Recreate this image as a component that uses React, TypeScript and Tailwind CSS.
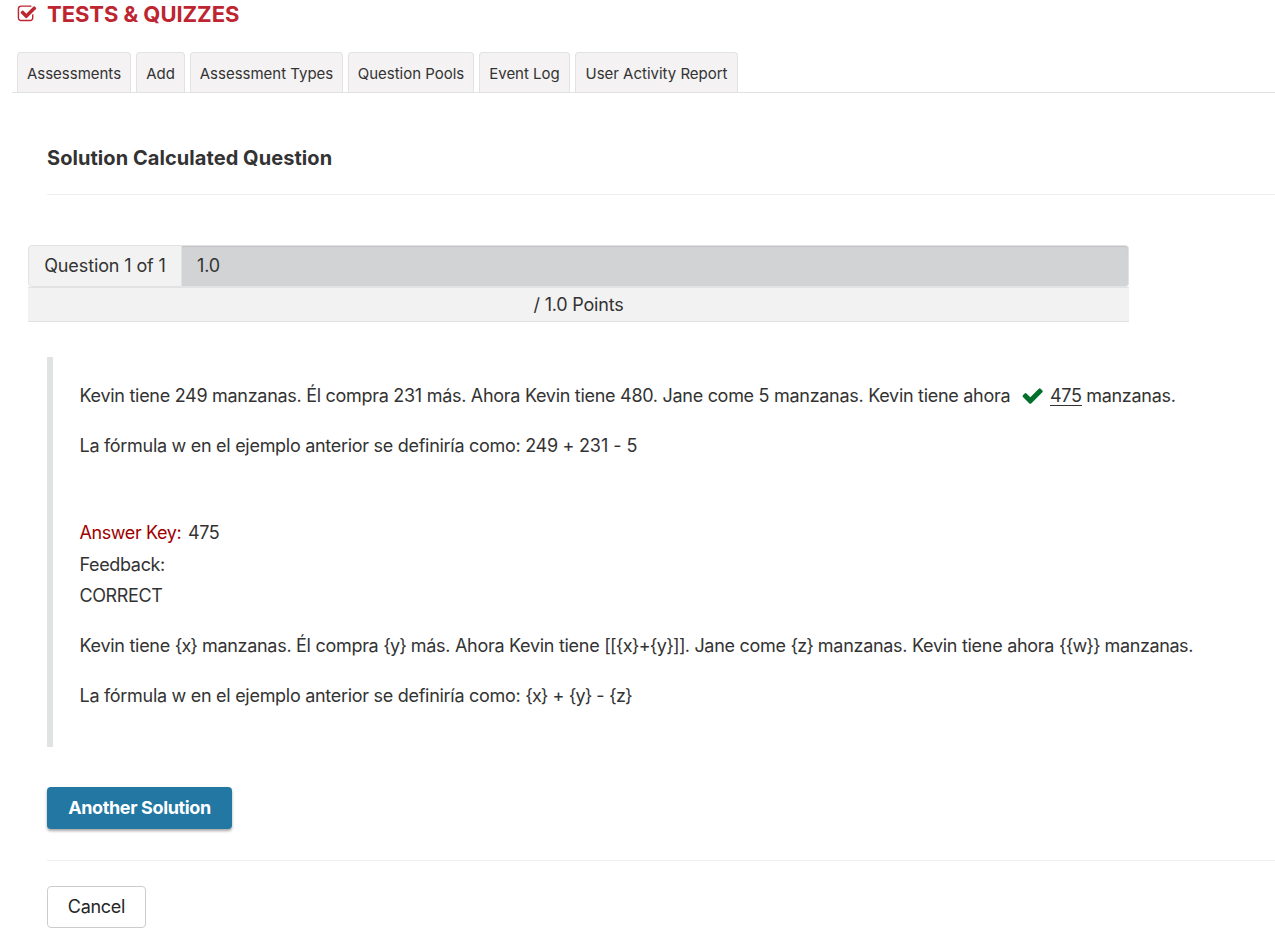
import React, { ReactNode } from 'react';

const tabs = [
  { label: 'Assessments', width: 'w-[114px]' },
  { label: 'Add', width: 'w-[49px]' },
  { label: 'Assessment Types', width: 'w-[153px]' },
  { label: 'Question Pools', width: 'w-[126px]' },
  { label: 'Event Log', width: 'w-[91px]' },
  { label: 'User Activity Report', width: 'w-[163px]' },
];

function CheckSquareIcon({ className }: { className: string }) {
  return (
    <svg viewBox="0 0 1792 1792" fill="currentColor" className={className}>
      <path d="M1472 930v318q0 119-84.5 203.5t-203.5 84.5h-832q-119 0-203.5-84.5t-84.5-203.5v-832q0-119 84.5-203.5t203.5-84.5h832q63 0 117 25 15 7 18 23 3 17-9 29l-49 49q-10 10-23 10-3 0-9-2-23-6-45-6h-832q-66 0-113 47t-47 113v832q0 66 47 113t113 47h832q66 0 113-47t47-113v-254q0-13 9-22l64-64q10-10 23-10 6 0 12 3 20 8 20 29zm231-489l-814 814q-24 24-57 24t-57-24l-430-430q-24-24-24-57t24-57l110-110q24-24 57-24t57 24l263 263 647-647q24-24 57-24t57 24l110 110q24 24 24 57t-24 57z" />
    </svg>
  );
}

function CheckIcon({ className }: { className: string }) {
  return (
    <svg viewBox="0 0 1792 1792" fill="currentColor" className={className}>
      <path d="M1671 566q0 40-28 68l-724 724-136 136q-28 28-68 28t-68-28l-136-136-362-362q-28-28-28-68t28-68l136-136q28-28 68-28t68 28l294 295 656-657q28-28 68-28t68 28l136 136q28 28 28 68z" />
    </svg>
  );
}

function Token({ children }: { children: ReactNode }) {
  return <span className="tracking-[-0.9px]">{children}</span>;
}

export default function App() {
  return (
    <div className="h-[946px] w-full overflow-hidden bg-white font-['Inter',sans-serif] text-[18px] leading-[31px] tracking-[-0.29px] text-[#333]">
      <header className="flex h-[52px] items-start gap-[11px] pl-[17px]">
        <CheckSquareIcon className="mt-[3.6px] size-5 text-[#bd2630]" />
        <h1 className="-ml-px text-[22px] leading-[28px] font-bold tracking-[-0.05px] text-[#bd2630]">TESTS &amp; QUIZZES</h1>
      </header>
      <nav className="ml-3 flex h-[41px] gap-[5px] border-b border-[#e0e2e3] pl-[5px]">
        {tabs.map((t) => (
          <a key={t.label} className={`${t.width} flex h-10 items-center justify-center rounded-t-[4px] border border-b-0 border-[#e0e2e3] bg-[#f4f2f3] pt-px text-[15px] tracking-[-0.01px] whitespace-nowrap`}>
            {t.label}
          </a>
        ))}
      </nav>
      <div className="ml-[47px] h-[102px] border-b border-[#eee] pt-[49px]">
        <h2 className="text-[20px] leading-[32px] font-bold tracking-[0.06px]">Solution Calculated Question</h2>
      </div>
      <section className="mt-[50px] ml-7 w-[1101px]">
        <div className="flex h-[42px]">
          <div className="flex w-[154px] items-center justify-center rounded-l-[4px] border border-[#e0e2e3] bg-[#f2f2f2] pb-px tracking-[-0.12px]">Question 1 of 1</div>
          <div className="flex flex-1 items-center rounded-r-[4px] border border-l-0 border-[#e0e2e3] bg-[#d2d3d5] pb-px pl-[15px] tracking-[-0.1px] shadow-[inset_0_1px_1px_rgba(0,0,0,0.075)]">1.0</div>
        </div>
        <div className="flex h-[35px] items-center justify-center border-y border-[#e0e2e3] bg-[#f2f2f2] tracking-[-0.2px]">/ 1.0 Points</div>
      </section>
      <section className="mt-[35px] ml-[47px] h-[390px] border-l-[6px] border-[#e0e2e3] pt-[23px] pl-[26.5px] whitespace-nowrap">
        <p className="mb-[19px] flex h-[31px]">
          Kevin tiene 249 manzanas. Él compra 231 más. Ahora Kevin tiene 480. Jane come 5 manzanas. Kevin tiene ahora
          <CheckIcon className="mt-[4px] mr-[6px] ml-[10.4px] size-[23.3px] shrink-0 text-[#026f2b]" />
          <span className="mt-[5px] mr-[4.5px] h-[21px] border-b border-[#333] leading-[21px]">475</span>
          manzanas.
        </p>
        <p>La fórmula w en el ejemplo anterior se definiría como: 249 + <span className="tracking-[-0.05px]">231 - 5</span></p>
        <p className="mt-14 mb-px"><span className="mr-[2px] tracking-[-0.4px] text-[#a00000]">Answer Key:</span> <span className="tracking-[-0.4px]">475</span></p>
        <p className="tracking-[-0.35px]">Feedback:</p>
        <p className="tracking-[-0.4px]">CORRECT</p>
        <p className="my-[19px]">
          Kevin tiene <Token>{'{x}'}</Token> manzanas. Él compra <Token>{'{y}'}</Token> más. Ahora Kevin tiene <span className="tracking-[-0.75px]">{'[[{x}+{y}]]'}</span>. Jane come <Token>{'{z}'}</Token> manzanas. Kevin tiene ahora <Token>{'{{w}}'}</Token> <span className="tracking-[-0.4px]">manzanas.</span>
        </p>
        <p>
          La fórmula w en el ejemplo anterior se definiría como: <Token>{'{x}'}</Token> + <Token>{'{y}'}</Token> - <Token>{'{z}'}</Token>
        </p>
      </section>
      <div className="ml-[47px] h-[114px] border-b border-[#eee] pt-10">
        <button className="block h-[42px] w-[185px] rounded-[4px] bg-[#2277a3] pb-px font-bold tracking-[-0.36px] text-white shadow-[0_2px_3px_rgba(0,0,0,0.35)]">Another Solution</button>
      </div>
      <button className="mt-[25px] ml-[47px] block h-[42px] w-[99px] rounded-[4px] border border-[#ccc] bg-white pb-px text-[#262626]">Cancel</button>
    </div>
  );
}
